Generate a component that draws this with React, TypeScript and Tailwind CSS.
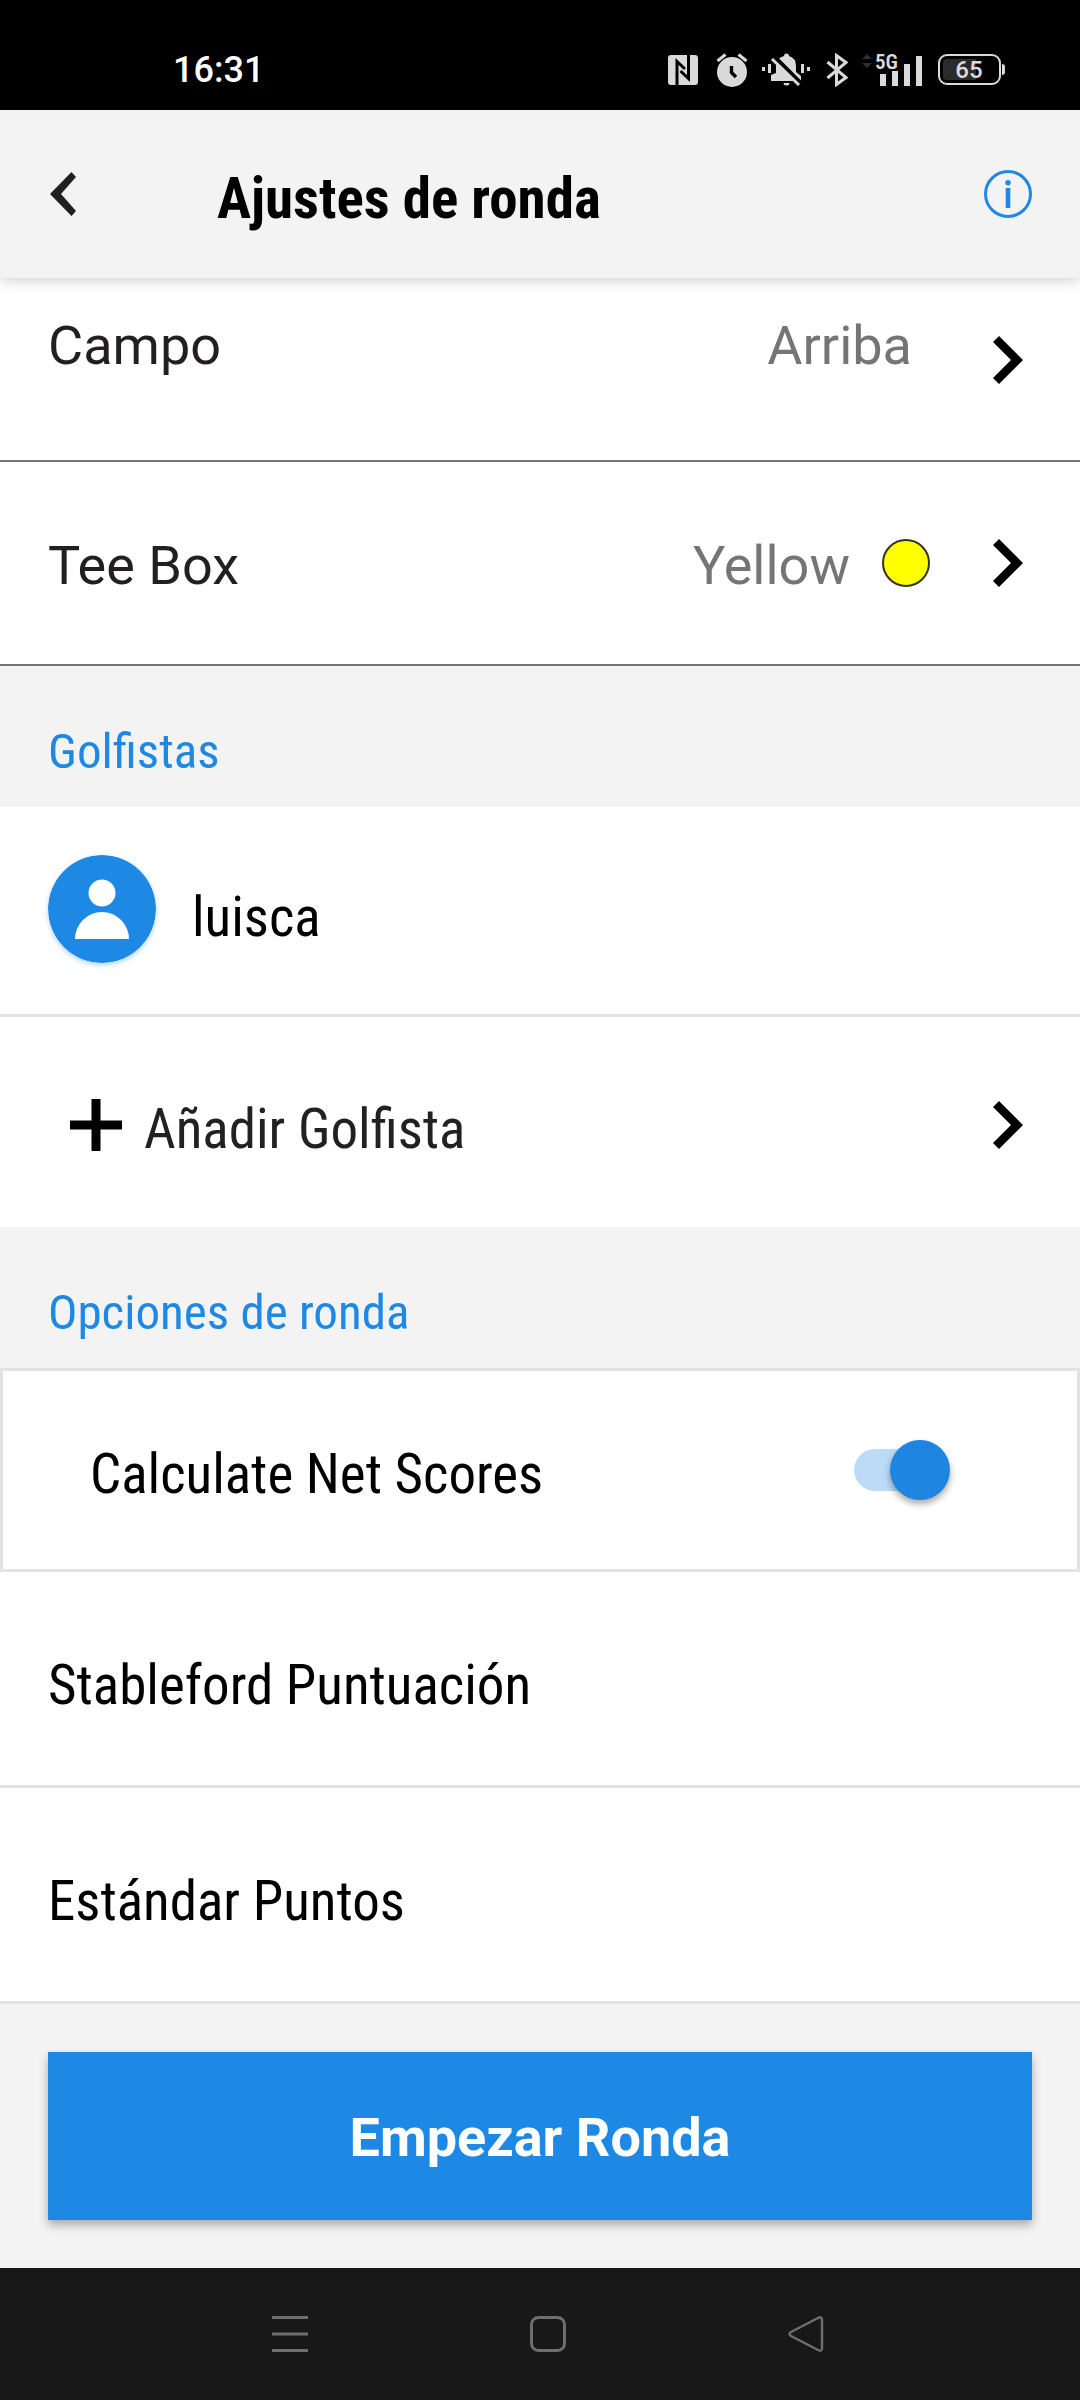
import { useState } from "react";

function ChevronRight({ className = "" }: { className?: string }) {
  return (
    <svg className={"h-12 w-[30px] shrink-0 " + className} viewBox="0 0 30 48" aria-hidden="true">
      <path d="M6 0 L30 24 L6 48 L0 42 L18 24 L0 6 Z" fill="#000" />
    </svg>
  );
}

function StatusBar() {
  return (
    <div className="flex h-[110px] items-center justify-between bg-black pt-[30px] pr-[75px] pl-[173px]">
      <span className="text-[36px] leading-[40px] font-medium text-white">16:31</span>
      <div className="flex items-center text-[#dadada]">
        {/* NFC */}
        <svg className="mr-[18px] h-[30px] w-[30px]" viewBox="0 0 30 30" aria-hidden="true">
          <rect width="30" height="30" rx="3" fill="currentColor" />
          <path d="M9 30 V6.5 L17 14 M20.5 0 V23.5 L12.500 16" fill="none" stroke="#000" strokeWidth="3" />
        </svg>
        {/* Alarm */}
        <svg className="mr-[14px] h-[34px] w-[32px]" viewBox="0 0 32 34" aria-hidden="true">
          <circle cx="16" cy="19" r="15" fill="currentColor" />
          <path d="M1.5 8 L9.5 1.5 M30.5 8 L22.5 1.5" stroke="currentColor" strokeWidth="3" />
          <path d="M15.5 13 V19.5 L20 24" fill="none" stroke="#000" strokeWidth="3.4" />
        </svg>
        {/* Muted bell */}
        <svg className="mr-[15px] h-[34px] w-[49px]" viewBox="0 0 49 34" aria-hidden="true">
          <path d="M0 14h3v4H0zM6 11h3v9H6zM39 11h3v9h-3zM45 14h3v4h-3z" fill="currentColor" />
          <path
            d="M22 3 a2.500 2.500 0 0 1 5 0 Q34 5 34 13 V19 L39 23 V28 H9 V22 L14 20 V13 Q14 5 22 3Z M21.500 30 h6 a3 2.500 0 0 1 -6 0Z"
            fill="currentColor"
          />
          <path d="M11 2.500 L40 31.500" stroke="#000" strokeWidth="4.500" />
          <path d="M10 6 L37 32" stroke="currentColor" strokeWidth="3" />
        </svg>
        {/* Bluetooth */}
        <svg className="mr-[14px] h-[34px] w-[22px]" viewBox="0 0 22 34" aria-hidden="true">
          <path d="M1.500 9 L20 24.500 L10.500 31.500 V2.500 L20 9.500 L1.500 25" fill="none" stroke="currentColor" strokeWidth="3" />
        </svg>
        {/* Signal */}
        <svg className="mr-[16px] h-[42px] w-[60px]" viewBox="0 -4 60 42" aria-hidden="true">
          <path d="M0 6 L5 1 L10 6Z M0 10 L5 15 L10 10Z" fill="#303030" />
          <text x="13" y="16" fontFamily="Roboto Condensed, Roboto, sans-serif" fontSize="21" fontWeight="600" fill="currentColor">
            5G
          </text>
          <path d="M18 21h6v12h-6zM30 18h6v15h-6zM42 11h6v22h-6zM54 3h6v30h-6z" fill="currentColor" />
        </svg>
        {/* Battery */}
        <svg className="h-[32px] w-[67px]" viewBox="0 0 67 32" aria-hidden="true">
          <rect x="1" y="1" width="61" height="29" rx="8" fill="none" stroke="currentColor" strokeWidth="2" />
          <path d="M9 5 H38 V26 H9 Q5 26 5 22 V9 Q5 5 9 5Z" fill="#2b2b2b" />
          <path d="M64 10 q3 0 3 3 v5 q0 3 -3 3z" fill="currentColor" />
          <text x="31" y="24" textAnchor="middle" fontFamily="Roboto, sans-serif" fontSize="24" fontWeight="500" fill="currentColor">
            65
          </text>
        </svg>
      </div>
    </div>
  );
}

function SectionTitle({ children }: { children: string }) {
  return (
    <h2 className="flex min-h-[141px] items-end bg-[#f3f3f3] px-12 pb-[25px] font-['Roboto_Condensed','Roboto',sans-serif] text-[49px] leading-[60px] text-[#1e88e5]">
      {children}
    </h2>
  );
}

function OptionRow({ children }: { children: string }) {
  return (
    <button
      type="button"
      className="flex min-h-[216px] w-full items-center border-b-[3px] border-[#e3e3e3] px-12 pt-3 text-left font-['Roboto_Condensed','Roboto',sans-serif] text-[55px] leading-[60px] text-black"
    >
      {children}
    </button>
  );
}

export default function App() {
  const [net, setNet] = useState(true);

  return (
    <div className="flex min-h-screen flex-col bg-[#f3f3f3] font-['Roboto',sans-serif]">
      <StatusBar />

      <header className="relative z-10 flex min-h-[168px] items-center bg-[#f3f3f3] pr-12 pl-[50px] shadow-[0_2px_14px_rgba(0,0,0,0.2)]">
        <button type="button" aria-label="Volver" className="shrink-0">
          <svg className="h-11 w-[26px]" viewBox="0 0 26 44" aria-hidden="true">
            <path d="M21.500 0 L26 5 L11 22 L26 39 L21.500 44 L0 22 Z" fill="#231f20" />
          </svg>
        </button>
        <h1 className="ml-[141px] flex-1 pt-[10px] font-['Roboto_Condensed','Roboto',sans-serif] text-[57px] leading-[60px] font-bold text-black">
          Ajustes de ronda
        </h1>
        <button type="button" aria-label="Información" className="shrink-0">
          <svg className="h-12 w-12" viewBox="0 0 48 48" aria-hidden="true">
            <circle cx="24" cy="24" r="22.500" fill="none" stroke="#1e88e5" strokeWidth="3" />
            <circle cx="24" cy="12.700" r="2.700" fill="#1e88e5" />
            <rect x="21.700" y="18" width="4.600" height="20" fill="#1e88e5" />
          </svg>
        </button>
      </header>

      <main className="flex flex-col bg-white">
        <button
          type="button"
          className="flex min-h-[184px] items-start border-b-2 border-[#757575] pt-[38px] pr-[57px] pl-12 text-left text-[54px] leading-[60px]"
        >
          <span className="flex-1 text-[#231f20]">Campo</span>
          <span className="text-[#757575]">Arriba</span>
          <ChevronRight className="mt-5 ml-[81px]" />
        </button>
        <button
          type="button"
          className="flex min-h-[204px] items-center border-b-2 border-[#757575] pr-[57px] pl-12 text-left text-[54px] leading-[60px]"
        >
          <span className="flex-1 pt-1.5 text-[#231f20]">Tee Box</span>
          <span className="pt-1.5 text-[#757575]">Yellow</span>
          <span className="ml-8 size-12 rounded-full border-2 border-[#333322] bg-[#ffff00]" />
          <ChevronRight className="ml-[63px]" />
        </button>

        <SectionTitle>Golfistas</SectionTitle>
        <div className="flex min-h-[210px] items-center gap-9 border-b-[3px] border-[#e3e3e3] px-12 pb-1">
          <svg className="size-[108px] rounded-full shadow-[0_2px_5px_rgba(30,136,229,0.35)]" viewBox="0 0 108 108" aria-hidden="true">
            <circle cx="54" cy="54" r="54" fill="#1e88e5" />
            <circle cx="54" cy="38" r="13.500" fill="#fff" />
            <path d="M27 84 a27 27 0 0 1 54 0Z" fill="#fff" />
          </svg>
          <span className="pt-4 font-['Roboto_Condensed','Roboto',sans-serif] text-[55px] leading-[60px] text-black">luisca</span>
        </div>
        <button type="button" className="flex min-h-[210px] items-center pt-1.5 pr-[57px] pl-[70px] text-left">
          <svg className="size-[52px] shrink-0" viewBox="0 0 52 52" aria-hidden="true">
            <path d="M26 0 V52 M0 26 H52" stroke="#000" strokeWidth="9" />
          </svg>
          <span className="ml-[22px] flex-1 pt-2 font-['Roboto_Condensed','Roboto',sans-serif] text-[55px] leading-[60px] text-[#212121]">
            Añadir Golfista
          </span>
          <ChevronRight />
        </button>

        <SectionTitle>Opciones de ronda</SectionTitle>
        <div className="flex min-h-[204px] items-center justify-between border-[3px] border-[#e3e3e3] pr-[139px] pl-[87px]">
          <label htmlFor="net-scores" className="pt-2 font-['Roboto_Condensed','Roboto',sans-serif] text-[55px] leading-[60px] text-black">
            Calculate Net Scores
          </label>
          <input
            id="net-scores"
            type="checkbox"
            role="switch"
            checked={net}
            onChange={(e) => setNet(e.target.checked)}
            className="relative h-[42px] w-[84px] shrink-0 appearance-none rounded-full bg-[#cccccc] before:absolute before:-top-[9px] before:-left-3 before:size-[60px] before:rounded-full before:bg-[#f1f1f1] before:shadow-[0_4px_7px_rgba(0,0,0,0.35)] checked:bg-[#bbdbf7] checked:before:left-9 checked:before:bg-[#1e85e0]"
          />
        </div>
        <OptionRow>Stableford Puntuación</OptionRow>
        <OptionRow>Estándar Puntos</OptionRow>
      </main>

      <div className="flex-1 p-12">
        <button
          type="button"
          className="min-h-[168px] w-full bg-[#1e88e5] pt-1 text-[54px] leading-[60px] font-bold text-white shadow-[0_5px_9px_rgba(0,0,0,0.3)]"
        >
          Empezar Ronda
        </button>
      </div>

      <nav className="grid min-h-[132px] grid-cols-3 place-items-center bg-[#181818] pr-[145px] pl-[161px] text-[#6e6e6e]">
        <button type="button" aria-label="Recientes">
          <svg className="size-9" viewBox="0 0 36 36" aria-hidden="true">
            <path d="M0 1.500 H36 M0 18 H36 M0 34.500 H36" stroke="currentColor" strokeWidth="3" />
          </svg>
        </button>
        <button type="button" aria-label="Inicio">
          <svg className="size-9" viewBox="0 0 36 36" aria-hidden="true">
            <rect x="1.500" y="1.500" width="33" height="33" rx="7" fill="none" stroke="currentColor" strokeWidth="3" />
          </svg>
        </button>
        <button type="button" aria-label="Atrás">
          <svg className="size-9" viewBox="0 0 36 36" aria-hidden="true">
            <path
              d="M30 2 Q34 0 34 4 V32 Q34 36 30 34 L3 20 Q0 18 3 16 Z"
              fill="none"
              stroke="currentColor"
              strokeWidth="2.500"
              strokeLinejoin="round"
            />
          </svg>
        </button>
      </nav>
    </div>
  );
}
